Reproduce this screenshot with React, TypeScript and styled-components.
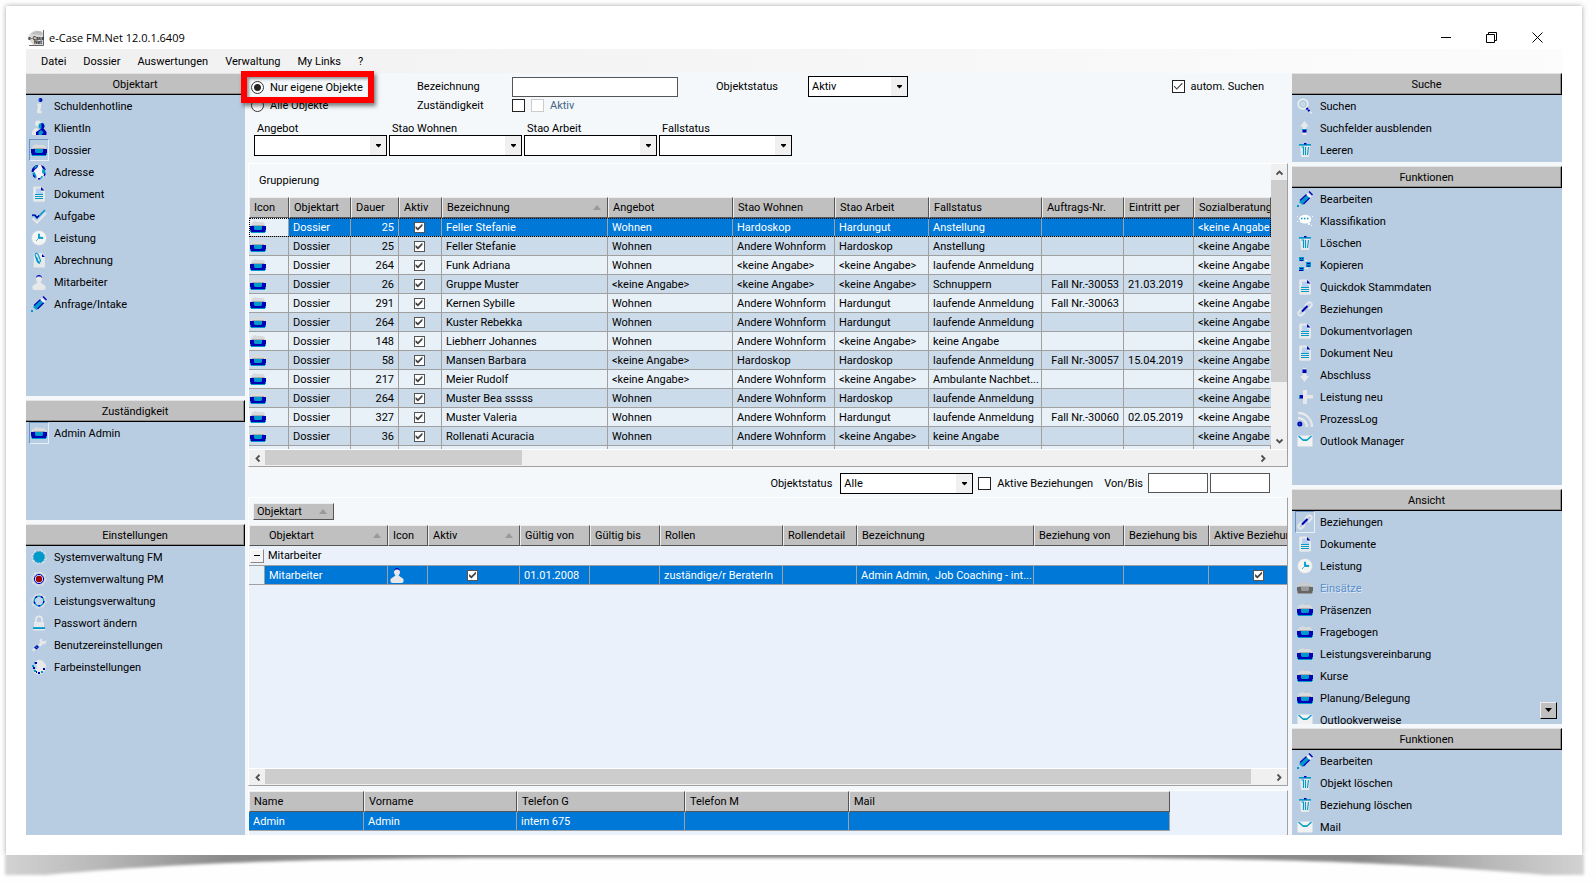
import React from "react";
import styled, { createGlobalStyle, css } from "styled-components";

const color = {
  panel: "#b8cce2",
  surface: "#f4f8fb",
  gridBack: "#eaf1fa",
  rowLight: "#e8f0f8",
  rowDark: "#cbdbea",
  header: "#c0c0c0",
  select: "#0078d8",
  line: "#a0a0a0",
  navy: "#0000b4",
  cyan: "#0099cc",
  pale: "#e6e8ea",
};

const GlobalStyle = createGlobalStyle`
  *, *::before, *::after { box-sizing: border-box; }
  body { margin: 0; background: #fefefe; }
  body, button, input, select, table {
    font-family: Roboto, "Liberation Sans", sans-serif;
    font-size: 11px;
    line-height: 13px;
    color: #000;
  }
  button { border: 0; padding: 0; background: none; }
`;

/* ---------- page and window ---------- */

const Page = styled.div`
  display: flex;
  flex-direction: column;
  height: 100vh;
  min-height: 760px;
`;

const Paper = styled.div`
  flex: 1;
  min-height: 0;
  display: flex;
  margin: 6px 14px 0 6px;
  padding: 20px 20px 20px;
  background: #fff;
  box-shadow: 0 0 5px rgba(0, 0, 0, 0.35);
`;

const CurlShadow = styled.svg`
  display: block;
  flex: none;
  width: 100%;
  height: 29px;
  position: relative;
  background: #fefefe;
`;

const AppWindow = styled.div`
  flex: 1;
  min-width: 0;
  display: flex;
  flex-direction: column;
`;

const TitleBar = styled.header`
  display: flex;
  align-items: center;
  height: 23px;
  padding: 0 2px;
  gap: 5px;
`;

const Title = styled.h1`
  flex: 1;
  margin: 0;
  font: 400 11px/16px "Open Sans", "Noto Sans", sans-serif;
`;

const WindowButtons = styled.div`
  display: flex;
`;

const WindowButton = styled.button`
  display: grid;
  place-items: center;
  width: 46px;
  height: 20px;
`;

const MenuBar = styled.nav`
  display: flex;
  align-items: center;
  gap: 17px;
  height: 24px;
  padding-left: 15px;
  background: linear-gradient(90deg, #f0f0f0, #fcfcfc);
`;

const MenuButton = styled.button`
  height: 20px;
`;

const Workspace = styled.div`
  flex: 1;
  min-height: 0;
  display: flex;
  background: ${color.surface};
`;

const SideBar = styled.aside<{ $width: number }>`
  flex: none;
  width: ${(p) => p.$width}px;
  display: flex;
  flex-direction: column;
  gap: 4px;
`;

const Centre = styled.main`
  flex: 1;
  min-width: 0;
  display: flex;
  flex-direction: column;
  padding: 0 4px 0 3px;
`;

/* ---------- side panels ---------- */

const SidePanel = styled.section<{ $height?: number }>`
  flex: ${(p) => (p.$height ? `0 0 ${p.$height}px` : "1 1 0")};
  min-height: 0;
  display: flex;
  flex-direction: column;
  overflow: hidden;
  background: ${color.panel};
  position: relative;
`;

const PanelTitle = styled.h2`
  flex: none;
  height: 22px;
  margin: 0;
  font-size: 11px;
  font-weight: 400;
  line-height: 21px;
  text-align: center;
  background: ${color.header};
  border: solid;
  border-width: 1px 1px 1px 0;
  border-color: #e4e4e4 #000 #000;
  box-shadow: inset -1px -1px #8c8c8c;
`;

const ItemList = styled.ul`
  list-style: none;
  margin: 0;
  padding: 0;
`;

const ItemButton = styled.button<{ $off?: boolean }>`
  display: flex;
  align-items: center;
  gap: 5px;
  width: 100%;
  height: 22px;
  padding-left: 3px;
  text-align: left;
  ${(p) =>
    p.$off &&
    css`
      color: #5b8fc9;
      text-shadow: 1px 1px #dfeaf6;
    `}
`;

const IconFrame = styled.span<{ $on?: boolean }>`
  display: grid;
  place-items: center;
  width: 20px;
  height: 22px;
  border: 1px solid transparent;
  ${(p) => p.$on && "border-color: #6a93c4 #e6eef7 #e6eef7 #6a93c4;"}
`;

const ScrollDown = styled.button`
  position: absolute;
  right: 5px;
  bottom: 5px;
  display: grid;
  place-items: center;
  width: 17px;
  height: 17px;
  background: ${color.header};
  border: 1px solid;
  border-color: #eee #000 #000 #eee;
`;

/* ---------- form controls ---------- */

const Filters = styled.form`
  flex: none;
  height: 90px;
  padding: 3px 24px 0 3px;
`;

const FilterGrid = styled.div`
  display: grid;
  grid-template-columns: 166px 95px 204px 92px 100px 1fr;
  grid-template-rows: 21px 17px;
  align-items: center;
`;

const Choice = styled.label<{ $muted?: boolean }>`
  display: flex;
  align-items: center;
  gap: 6px;
  position: relative;
  color: ${(p) => (p.$muted ? "#3f6584" : "#000")};
`;

const ScopeChoice = styled(Choice)`
  padding-top: 2px;
`;

const Marker = styled.span`
  position: absolute;
  inset: -8px auto auto -10px;
  width: 133px;
  height: 32px;
  border: 6px solid #f00;
  box-shadow: 2px 3px 4px rgba(0, 0, 0, 0.5), inset 2px 2px 3px rgba(0, 0, 0, 0.4);
  z-index: 2;
`;

const Radio = styled.input.attrs({ type: "radio" })`
  appearance: none;
  width: 13px;
  height: 13px;
  margin: 0;
  border: 1px solid #333;
  border-radius: 50%;
  background: #fff;
  &:checked {
    background: radial-gradient(circle, #222 0 3px, #fff 4px);
  }
`;

const Check = styled.input.attrs({ type: "checkbox" })<{ $small?: boolean }>`
  appearance: none;
  flex: none;
  display: grid;
  width: ${(p) => (p.$small ? 11 : 13)}px;
  height: ${(p) => (p.$small ? 11 : 13)}px;
  margin: 0;
  border: 1px solid ${(p) => (p.$small ? "#555" : "#222")};
  background: #fff;
  &:disabled {
    border-color: #ccc;
  }
  &:checked::after {
    content: "";
    background: #444;
    clip-path: ${(p) =>
      p.$small
        ? "polygon(12% 40%, 38% 62%, 88% 12%, 88% 40%, 38% 90%, 12% 66%)"
        : "polygon(10% 50%, 18% 43%, 38% 65%, 85% 16%, 92% 24%, 38% 80%)"};
  }
`;

const CheckPair = styled.div`
  display: flex;
  gap: 6px;
`;

const RightChoice = styled(Choice)`
  justify-self: end;
`;

const TextBox = styled.input<{ $width: number }>`
  width: ${(p) => p.$width}px;
  height: 20px;
  padding: 0 3px;
  border: 1px solid #555;
  background: #fff;
`;

const DropBox = styled.span<{ $width: number }>`
  position: relative;
  display: block;
  width: ${(p) => p.$width}px;
  height: 21px;

  select {
    appearance: none;
    display: block;
    width: 100%;
    height: 100%;
    padding: 0 18px 0 3px;
    border: 1px solid #000;
    border-radius: 0;
    background: linear-gradient(90deg, #fff calc(100% - 16px), #f0f0f0 calc(100% - 16px));
  }

  svg {
    position: absolute;
    right: 5px;
    top: 9px;
    pointer-events: none;
  }
`;

const DropRow = styled.div`
  display: flex;
  gap: 2px;
  margin: 8px 0 0 3px;
`;

const Stack = styled.label`
  display: block;
  span:first-child {
    padding-left: 3px;
  }
`;

const RelationFilters = styled.form`
  flex: none;
  display: flex;
  justify-content: flex-end;
  align-items: center;
  height: 30px;
  padding: 2px 18px 0 0;
`;

const Field = styled.label<{ $gap: number }>`
  display: flex;
  align-items: center;
  gap: ${(p) => p.$gap}px;
  margin-right: 5px;
`;

const RelationChoice = styled(Choice)`
  margin-right: 11px;
`;

const DateRange = styled.div`
  display: flex;
  align-items: center;
  gap: 2px;
  label {
    margin-right: 3px;
  }
`;

/* ---------- data grids ---------- */

const GridPanel = styled.section<{ $grow?: boolean }>`
  flex: ${(p) => (p.$grow ? "1 1 0" : "none")};
  min-height: 0;
  display: flex;
  flex-direction: column;
  overflow: hidden;
  border: solid;
  border-width: 1px;
  border-color: #fff ${color.line} ${color.line} #fff;
  background: ${color.gridBack};
`;

const ContactPanel = styled(GridPanel)`
  height: 45px;
  margin-top: 4px;
  border-bottom: 0;
`;

const GridBody = styled.div`
  display: flex;
`;

const GridView = styled.div<{ $height?: number }>`
  flex: 1;
  min-width: 0;
  overflow: hidden;
  ${(p) => p.$height && `height: ${p.$height}px;`}
`;

const GroupBar = styled.div<{ $tall?: boolean }>`
  display: flex;
  align-items: center;
  height: ${(p) => (p.$tall ? 33 : 27)}px;
  padding-left: ${(p) => (p.$tall ? 10 : 4)}px;
  background: ${color.surface};
`;

const GroupChip = styled.button`
  display: flex;
  align-items: center;
  justify-content: space-between;
  width: 81px;
  height: 17px;
  padding: 0 6px 0 3px;
  background: ${color.header};
  border: 1px solid;
  border-color: #eee #555 #555 #eee;
`;

const Table = styled.table<{ $width: number }>`
  width: ${(p) => p.$width}px;
  table-layout: fixed;
  border-collapse: separate;
  border-spacing: 0;
`;

const HeadCell = styled.th<{ $indent?: boolean }>`
  height: 21px;
  padding: 0 6px 0 ${(p) => (p.$indent ? 19 : 4)}px;
  font-weight: 400;
  text-align: left;
  white-space: nowrap;
  overflow: hidden;
  background: ${color.header};
  border: 1px solid;
  border-color: #eee #555 #555 #eee;
`;

const HeadLabel = styled.span`
  display: flex;
  align-items: center;
  justify-content: space-between;
`;

const Row = styled.tr<{ $dark?: boolean; $selected?: boolean; $focus?: boolean }>`
  background: ${(p) => (p.$dark ? color.rowDark : color.rowLight)};
  ${(p) =>
    p.$selected &&
    css`
      color: #fff;
      td:not([data-plain]) {
        background: ${color.select};
      }
    `}
  ${(p) =>
    p.$focus &&
    css`
      outline: 1px dotted #000;
      outline-offset: -1px;
    `}
`;

const cellPadding = { left: "0 1px 0 4px", right: "0 4px", center: "0 2px 0 0", icon: "0 1px" };

const Cell = styled.td<{ $align?: "right" | "center"; $icon?: boolean }>`
  height: 19px;
  padding: ${(p) => cellPadding[p.$icon ? "icon" : p.$align ?? "left"]};
  text-align: ${(p) => p.$align ?? "left"};
  white-space: nowrap;
  overflow: hidden;
  text-overflow: clip;
  border: solid ${color.line};
  border-width: 0 1px 1px 0;

  svg {
    display: block;
  }
  input {
    margin: 0 auto;
  }
`;

const CutCell = styled(Cell)`
  border-right: 0;
  padding-right: 0;
`;

const GroupCell = styled.td`
  height: 20px;
  padding: 0 1px;
  background: ${color.gridBack};
  border-bottom: 1px solid ${color.line};
`;

const GroupLine = styled.div`
  display: flex;
  align-items: center;
  gap: 4px;
`;

const Collapse = styled.button`
  display: grid;
  place-items: center;
  width: 14px;
  height: 14px;
  background: #f4f4f4;
  border: 1px solid;
  border-color: #fff #888 #888 #fff;
`;

/* ---------- scroll bars ---------- */

const HBar = styled.div`
  flex: none;
  display: flex;
  height: 17px;
  margin-top: auto;
  border-top: 1px solid #fff;
  background: #f0f0f0;
`;

const HTrack = styled.div`
  flex: 1;
  display: flex;
`;

const HThumb = styled.div<{ $size: string }>`
  width: ${(p) => p.$size};
  height: 15px;
  background: #cdcdcd;
`;

const ArrowButton = styled.button<{ $end?: boolean }>`
  display: grid;
  place-items: center;
  width: 16px;
  height: 16px;
  margin-right: ${(p) => (p.$end ? 16 : 0)}px;
`;

const VBar = styled.div`
  display: flex;
  flex-direction: column;
  width: 16px;
  background: #f0f0f0;
`;

const VTrack = styled.div`
  flex: 1;
`;

const VThumb = styled.div`
  height: 80%;
  background: #cdcdcd;
`;

/* ---------- icons ---------- */

type IconName =
  | "info" | "client" | "dossier" | "dossierOff" | "globe" | "doc" | "check" | "clock" | "bill"
  | "person" | "pencil" | "search" | "up" | "down" | "plus" | "trash" | "chat" | "copy" | "link"
  | "rss" | "mail" | "gearFull" | "gearRed" | "gearOpen" | "lock" | "wrench" | "palette";

const N = color.navy;
const C = color.cyan;
const P = color.pale;

const caseShape = (lid: string, body: string, inner: string) => (
  <>
    <path d="M1 7V5l2-2 3-1 1 1h6l2 2v2z" fill={lid} />
    <path d="M2 6h12v1H2z" fill="#a8aeb2" />
    <path d="M0 7h16v4h-1v2H1v-2H0z" fill={body} />
    <path d="M4 7h8v3l-1 1H5l-1-1zM0 11h1v2H0zM15 11h1v2h-1zM1 13h14v1H1z" fill={inner} />
  </>
);

const pageShape = (
  <>
    <path d="M3 .5h7L14 4v11l-1 .8H3l-.8-1V1.500z" fill={P} />
    <path d="M5 2.500h5V6h2v2H5z" fill="#b4d2f0" />
    <path d="M10 1v3.500h3.500z" fill={N} />
  </>
);

const gearTeeth = (
  <>
    <circle cx="8" cy="8" r="6.200" fill="none" stroke="#d3dce4" strokeWidth="1.400" />
    <circle cx="8" cy="8" r="7.200" fill="none" stroke="#d9dee2" strokeWidth="1.200" strokeDasharray="2.500 3.155" />
  </>
);

const drawings: Record<IconName, React.ReactNode> = {
  info: (
    <>
      <circle cx="9.500" cy="2" r="2" fill={N} />
      <circle cx="8.800" cy="2" r=".8" fill={C} />
      <path d="M6 5.500h4.500L9.300 13h1.400v2.300H6V13l1-5.500H6z" fill={P} />
    </>
  ),
  client: (
    <>
      <circle cx="7" cy="3.500" r="3" fill={P} />
      <path d="M1 14c0-4 2-6 5-6l2 2v5H1z" fill={P} />
      <circle cx="10.500" cy="6" r="3" fill={C} />
      <path d="M10.500 3a3 3 0 0 1 2 5.200L15.500 12v3H5v-3l4-2.500 1.500-1z" fill={N} />
      <path d="M7.500 12 10 10l2.500 2-2 3h-3z" fill={C} />
    </>
  ),
  dossier: caseShape("#d8dadc", N, C),
  dossierOff: caseShape("#c9cbcd", "#666", "#999"),
  globe: (
    <>
      <circle cx="8" cy="8" r="7" fill="#f2f5f7" />
      <path d="M3 2.500 5.500 1l2 .5L6 4 3.500 6l-1 2L.5 8 1 5zM10 1l3 1.500L15 6l-2.500-.5L11 3.500z" fill={N} />
      <path d="M4 2l3-.5L5 4 3 5zM1 9l2.500-1L5 11l1 3-3-1.500zM11.500 4.500l3 2V9l-2.500 1-1-2z" fill={C} />
      <path d="M1.500 10.500l1.500.5 2 3.500-2.500-1.500zM13.500 9l1.500.5-1.500 3-1-1zM7 14h3l-1 1.500H7z" fill={N} />
      <path d="M10.500 12l2 .5-2 2h-1.500z" fill={C} />
    </>
  ),
  doc: (
    <>
      {pageShape}
      <path d="M4 8h8v1H4zM4 10h8v1H4zM4 12h8v1H4z" fill={C} />
    </>
  ),
  check: (
    <>
      <path d="M1.500 10.500 6 14.500 15 5" fill="none" stroke={P} strokeWidth="2" />
      <path d="M1 7.500h3L6 10l8-8" fill="none" stroke={C} strokeWidth="1.600" />
      <path d="M1 7.200h3L6 9.500l2-2" fill="none" stroke={N} strokeWidth="1.300" />
    </>
  ),
  clock: (
    <>
      <circle cx="8" cy="8" r="7.300" fill="#f3f4f4" stroke="#d4d8db" strokeDasharray="1.500 1" />
      <path d="M7.500 4v4.500H12V7.500L8.500 7V4z" fill={C} stroke={C} strokeWidth=".8" />
      <path d="M7.500 8.500 5 11" stroke="#2fa3a8" strokeWidth=".8" />
    </>
  ),
  bill: (
    <>
      <path d="M3 1h8l3 3v11.500H2.500z" fill={P} />
      <path d="M11 2v3h3z" fill={N} />
      <path d="M4 2.500c1-2 3-1 3.500 1l2 5c0 2-2 2-2.500.5L5.500 5M4 2.500l1.500 5c1 3 2 4 3.500 3.500" fill="none" stroke={C} strokeWidth="1.100" />
    </>
  ),
  person: (
    <>
      <path d="M5 5a3 3 0 1 1 6 0c0 2-1 3-1.500 3.500L14.500 12v3L13 16H3l-1.500-1v-3l5-3.500C6 8 5 7 5 5z" fill={P} />
      <path d="M5 4c0-4 6-4 6 0L9.500 2.500h-3z" fill={N} />
    </>
  ),
  pencil: (
    <>
      <path d="M2 11 9.500 4l3 3-7 7z" fill={C} />
      <path d="M3 9.500l6.500-6M6.500 13l6.500-6.500" stroke={N} strokeWidth="1.200" />
      <path d="M9.500 3.500 11 2l3.500 3.500L13 7z" fill="#f4f6f8" />
      <path d="M11.500 1 12.500 0l3.500 3.500-1 1z" fill={N} />
      <path d="M0 14h2v2H0z" fill={C} />
    </>
  ),
  search: (
    <>
      <circle cx="6" cy="6" r="4.700" fill="#c6d9ec" stroke="#eef1f3" strokeWidth="1.800" />
      <circle cx="6" cy="6" r="3.400" fill="none" stroke="#a9c8cf" />
      <path d="M9.500 10l3.500 4" stroke={N} strokeWidth="2" strokeDasharray="2 .6" />
      <path d="M12.500 13.500l2.500 2" stroke={P} strokeWidth="1.800" />
    </>
  ),
  up: (
    <>
      <path d="M7.500 1 12 6.500H9.500V9h-4V6.500H3zM5.500 12.500h4V15h-4z" fill={P} />
      <path d="M5.500 9h4v3.500h-4z" fill={N} />
      <path d="M5.500 9h4v1h-4z" fill={C} />
    </>
  ),
  down: (
    <>
      <path d="M5.500 6.500h4V9H12l-4.500 6L3 9h2.500zM6 1h3v1H6z" fill={P} />
      <path d="M5.500 2.500h4V6h-4z" fill={N} />
    </>
  ),
  plus: (
    <>
      <path d="M6 1h4v5h6v3.500h-6V15H6z" fill={P} />
      <path d="M2 6h4v3.500H2z" fill={N} />
      <path d="M2 6h1v3.500H2z" fill={C} />
    </>
  ),
  trash: (
    <>
      <path d="M3 4h10l-1 11H4z" fill={P} />
      <path d="M2 2h12v1.600H2z" fill={C} />
      <path d="M7 1h2.500v1.500H7z" fill={N} />
      <path d="M4.500 5h2v8M8.500 5v8M11.500 5l-1 8" fill="none" stroke={C} strokeWidth="1.100" />
    </>
  ),
  chat: (
    <>
      <path d="M2 5.500c2-5 11-5 12 0 1 4-4 5.500-7 5L3.500 9.500z" fill="#fff" />
      <path d="M0 3h1v1H0zM15 3h1v1h-1zM11 10h2v2h-2zM14 12h1v1h-1zM0 8h1v1H0z" fill="#fff" />
      <path d="M4 5.500h1.500M7 5.500h1.500M10 5.500h1.500" stroke={C} strokeWidth="1.300" />
    </>
  ),
  copy: (
    <>
      <path d="M2 0h5v4H2zM9 5h5v5H9zM2 10h5v4H2z" fill={C} />
      <path d="M3 1h1v1H3zM5 1h1v1H5zM3 3h3v1H3zM10 6h3v1h-3zM10 8.500h3v1h-3zM3 11h3v1H3zM2 13h4v1H2z" fill={N} />
      <path d="M8 3h2v1H8zM8 11h3v1H8z" fill={P} />
    </>
  ),
  link: (
    <>
      <path d="M8 5l3-3.200c2-1.500 5 1 3.300 3.400L11.500 8M8 11l-3 3c-2 1.700-4.800-.8-3.300-3L4.500 8" fill="none" stroke={P} strokeWidth="1.900" />
      <path d="M5 10.500 10.500 5" stroke={N} strokeWidth="2" />
    </>
  ),
  rss: (
    <>
      <path d="M1 2c8 0 14 6 14 14M1 7c5 0 9 4 9 9" fill="none" stroke={P} strokeWidth="2.400" />
      <circle cx="2.800" cy="13" r="2.500" fill={N} />
      <circle cx="2.800" cy="13" r=".8" fill={C} />
    </>
  ),
  mail: (
    <>
      <path d="M.5 2.500h15v11H.5z" fill="#f0f2f3" />
      <path d="M1.500 3 6 7h4l4.500-4" fill="none" stroke={C} strokeWidth="1.300" />
      <path d="M6 7.500h4" stroke="#00a8a8" />
    </>
  ),
  gearFull: (
    <>
      {gearTeeth}
      <circle cx="8" cy="8" r="5.500" fill={C} />
      <circle cx="8" cy="8" r="5.800" fill="none" stroke={C} strokeDasharray="1.500 1.500" />
    </>
  ),
  gearRed: (
    <>
      {gearTeeth}
      <circle cx="8" cy="8" r="4.600" fill="#d8e8f2" stroke={N} />
      <circle cx="8" cy="8" r="3.200" fill="#a00000" />
    </>
  ),
  gearOpen: (
    <>
      {gearTeeth}
      <circle cx="8" cy="8" r="4.800" fill="#c3d5ea" stroke={C} strokeWidth="1.300" />
      <circle cx="8" cy="8" r="4.800" fill="none" stroke={N} strokeWidth="1.300" strokeDasharray="2 4" />
    </>
  ),
  lock: (
    <>
      <path d="M5 7V4c0-3.500 6-3.500 6 0v3" fill="none" stroke={P} strokeWidth="1.800" />
      <path d="M3 7h10v5H3zM2 14h12v1.500H2z" fill={P} />
      <path d="M2 12.200h12V14H2z" fill={C} />
    </>
  ),
  wrench: (
    <>
      <path d="M7 8l2-2-.5-3L11 1v3h3l1.500-1-1 4-3 .5-2 2z" fill={P} />
      <path d="M3 10.500 6 8l2 2-2.500 2.500z" fill={N} />
      <path d="M4.500 9.800l2 1" stroke={C} />
      <path d="M1 13l2-2 1.500 1.500-2 2z" fill={P} />
    </>
  ),
  palette: (
    <>
      <path d="M4 2.500 8 .5l4 1.500 3 4-.5 5L11 15l-5 .5L2 13l4-4z" fill={P} />
      <path d="M3 3h2v1.500H3zM1 6h2v2H1zM3 11h2v2H3zM10 12h2v2h-2z" fill={C} />
      <path d="M4 3h2v2H4zM2 8h2v2H2zM5 12h1v2H5zM7 13h2v2H7zM12 9h2v2h-2z" fill={N} />
    </>
  ),
};

const Icon = ({ name }: { name: IconName }) => (
  <svg width="16" height="16" viewBox="0 0 16 16" aria-hidden="true">
    {drawings[name]}
  </svg>
);

const SortMark = () => (
  <svg width="8" height="5" viewBox="0 0 8 5" aria-hidden="true">
    <path d="M4 0 8 5H0z" fill="#999" />
  </svg>
);

const DropMark = () => (
  <svg width="7" height="4" viewBox="0 0 7 4" aria-hidden="true">
    <path d="M1 0h5v1L3.500 3.500 1 1z" fill="#000" />
  </svg>
);

const Chevron = ({ turn }: { turn: number }) => (
  <svg width="9" height="9" viewBox="0 0 9 9" aria-hidden="true">
    <path d="M1.500 6.500l3-3 3 3" transform={`rotate(${turn} 4.500 4.500)`} fill="none" stroke="#505050" strokeWidth="1.800" />
  </svg>
);

const AppLogo = () => (
  <svg width="16" height="16" viewBox="0 0 16 16" aria-hidden="true">
    <path d="M0 8C1 3 5 .5 9 .5L15 2v13H5z" fill="#d9d9d9" />
    <path d="M3 4c3-3 8-4 11-2v3z" fill="#bdbdbd" />
    <path d="M15.500 0v15.500H1" fill="none" stroke="#666" />
    <text x="0" y="9.500" fontSize="5" fontWeight="700" fill="#222">e-Case</text>
    <text x="6" y="14" fontSize="5" fontWeight="700" fill="#222">Net</text>
  </svg>
);

/* ---------- data ---------- */

type Item = { icon: IconName; label: string; on?: boolean; off?: boolean };

const objectTypes: Item[] = [
  { icon: "info", label: "Schuldenhotline" },
  { icon: "client", label: "KlientIn" },
  { icon: "dossier", label: "Dossier", on: true },
  { icon: "globe", label: "Adresse" },
  { icon: "doc", label: "Dokument" },
  { icon: "check", label: "Aufgabe" },
  { icon: "clock", label: "Leistung" },
  { icon: "bill", label: "Abrechnung" },
  { icon: "person", label: "Mitarbeiter" },
  { icon: "pencil", label: "Anfrage/Intake" },
];

const settings: Item[] = [
  { icon: "gearFull", label: "Systemverwaltung FM" },
  { icon: "gearRed", label: "Systemverwaltung PM" },
  { icon: "gearOpen", label: "Leistungsverwaltung" },
  { icon: "lock", label: "Passwort ändern" },
  { icon: "wrench", label: "Benutzereinstellungen" },
  { icon: "palette", label: "Farbeinstellungen" },
];

const searchItems: Item[] = [
  { icon: "search", label: "Suchen" },
  { icon: "up", label: "Suchfelder ausblenden" },
  { icon: "trash", label: "Leeren" },
];

const functions: Item[] = [
  { icon: "pencil", label: "Bearbeiten" },
  { icon: "chat", label: "Klassifikation" },
  { icon: "trash", label: "Löschen" },
  { icon: "copy", label: "Kopieren" },
  { icon: "doc", label: "Quickdok Stammdaten" },
  { icon: "link", label: "Beziehungen" },
  { icon: "doc", label: "Dokumentvorlagen" },
  { icon: "doc", label: "Dokument Neu" },
  { icon: "down", label: "Abschluss" },
  { icon: "plus", label: "Leistung neu" },
  { icon: "rss", label: "ProzessLog" },
  { icon: "mail", label: "Outlook Manager" },
];

const views: Item[] = [
  { icon: "link", label: "Beziehungen", on: true },
  { icon: "doc", label: "Dokumente" },
  { icon: "clock", label: "Leistung" },
  { icon: "dossierOff", label: "Einsätze", off: true },
  { icon: "dossier", label: "Präsenzen" },
  { icon: "dossier", label: "Fragebogen" },
  { icon: "dossier", label: "Leistungsvereinbarung" },
  { icon: "dossier", label: "Kurse" },
  { icon: "dossier", label: "Planung/Belegung" },
  { icon: "mail", label: "Outlookverweise" },
];

const relationFunctions: Item[] = [
  { icon: "pencil", label: "Bearbeiten" },
  { icon: "trash", label: "Objekt löschen" },
  { icon: "trash", label: "Beziehung löschen" },
  { icon: "mail", label: "Mail" },
];

const NA = "<keine Angabe>";
const AW = "Andere Wohnform";
const LA = "laufende Anmeldung";

const dossierColumns: [string, number][] = [
  ["Icon", 40], ["Objektart", 62], ["Dauer", 48], ["Aktiv", 43], ["Bezeichnung", 166], ["Angebot", 125],
  ["Stao Wohnen", 102], ["Stao Arbeit", 94], ["Fallstatus", 113], ["Auftrags-Nr.", 82], ["Eintritt per", 70],
  ["Sozialberatung", 77],
];

const dossiers: [number, string, string, string, string, string, string?, string?][] = [
  [25, "Feller Stefanie", "Wohnen", "Hardoskop", "Hardungut", "Anstellung"],
  [25, "Feller Stefanie", "Wohnen", AW, "Hardoskop", "Anstellung"],
  [264, "Funk Adriana", "Wohnen", NA, NA, LA],
  [26, "Gruppe Muster", NA, NA, NA, "Schnuppern", "Fall Nr.-30053", "21.03.2019"],
  [291, "Kernen Sybille", "Wohnen", AW, "Hardungut", LA, "Fall Nr.-30063"],
  [264, "Kuster Rebekka", "Wohnen", AW, "Hardungut", LA],
  [148, "Liebherr Johannes", "Wohnen", AW, NA, "keine Angabe"],
  [58, "Mansen Barbara", NA, "Hardoskop", "Hardoskop", LA, "Fall Nr.-30057", "15.04.2019"],
  [217, "Meier Rudolf", NA, AW, NA, "Ambulante Nachbet..."],
  [264, "Muster Bea sssss", "Wohnen", AW, "Hardoskop", LA],
  [327, "Muster Valeria", "Wohnen", AW, "Hardungut", LA, "Fall Nr.-30060", "02.05.2019"],
  [36, "Rollenati Acuracia", "Wohnen", AW, NA, "keine Angabe"],
];

const relationColumns: [string, number][] = [
  ["Icon", 40], ["Aktiv", 92], ["Gültig von", 70], ["Gültig bis", 70], ["Rollen", 123], ["Rollendetail", 74],
  ["Bezeichnung", 177], ["Beziehung von", 90], ["Beziehung bis", 85], ["Aktive Beziehung", 102],
];

const contactColumns: [string, number][] = [
  ["Name", 115], ["Vorname", 153], ["Telefon G", 168], ["Telefon M", 164], ["Mail", 321],
];

const total = (columns: [string, number][]) => columns.reduce((sum, [, w]) => sum + w, 0);

/* ---------- composed parts ---------- */

const Panel = ({ title, items, height, more }: { title: string; items: Item[]; height?: number; more?: boolean }) => (
  <SidePanel $height={height}>
    <PanelTitle>{title}</PanelTitle>
    <ItemList>
      {items.map((item) => (
        <li key={item.label}>
          <ItemButton type="button" $off={item.off} disabled={item.off}>
            <IconFrame $on={item.on}>
              <Icon name={item.icon} />
            </IconFrame>
            {item.label}
          </ItemButton>
        </li>
      ))}
    </ItemList>
    {more && (
      <ScrollDown type="button" aria-label="Weitere Einträge">
        <svg width="9" height="5" viewBox="0 0 9 5" aria-hidden="true">
          <path d="M1 0h7L4.500 4z" fill="#000" />
        </svg>
      </ScrollDown>
    )}
  </SidePanel>
);

const Drop = ({ width, value = "", label }: { width: number; value?: string; label?: string }) => (
  <DropBox $width={width}>
    <select defaultValue={value} aria-label={label}>
      <option>{value}</option>
    </select>
    <DropMark />
  </DropBox>
);

const HScroll = ({ size, inset }: { size: string; inset?: boolean }) => (
  <HBar>
    <ArrowButton type="button" aria-label="Nach links">
      <Chevron turn={-90} />
    </ArrowButton>
    <HTrack>
      <HThumb $size={size} />
    </HTrack>
    <ArrowButton type="button" aria-label="Nach rechts" $end={inset}>
      <Chevron turn={90} />
    </ArrowButton>
  </HBar>
);

const ColumnHead = ({ name, sorted }: { name: string; sorted?: boolean }) => (
  <HeadCell scope="col">
    <HeadLabel>
      {name}
      {sorted && <SortMark />}
    </HeadLabel>
  </HeadCell>
);

const DossierTable = () => (
  <Table $width={total(dossierColumns)}>
    <colgroup>
      {dossierColumns.map(([name, width]) => (
        <col key={name} width={width} />
      ))}
    </colgroup>
    <thead>
      <tr>
        {dossierColumns.map(([name]) => (
          <ColumnHead key={name} name={name} sorted={name === "Bezeichnung"} />
        ))}
      </tr>
    </thead>
    <tbody>
      {dossiers.map(([days, name, offer, living, work, status, order = "", entry = ""], i) => (
        <Row key={i} $dark={i % 2 === 1} $selected={i === 0} $focus={i === 0}>
          <Cell $icon data-plain>
            <Icon name="dossier" />
          </Cell>
          <Cell>Dossier</Cell>
          <Cell $align="right">{days}</Cell>
          <Cell $align="center">
            <Check $small defaultChecked aria-label={`${name} aktiv`} />
          </Cell>
          <Cell>{name}</Cell>
          <Cell>{offer}</Cell>
          <Cell>{living}</Cell>
          <Cell>{work}</Cell>
          <Cell>{status}</Cell>
          <Cell $align="right">{order}</Cell>
          <Cell>{entry}</Cell>
          <CutCell>{"<keine Angabe"}</CutCell>
        </Row>
      ))}
      <Row>
        {dossierColumns.map(([name]) => (
          <Cell key={name} />
        ))}
      </Row>
    </tbody>
  </Table>
);

const RelationTable = () => (
  <Table $width={total(relationColumns) + 139}>
    <colgroup>
      <col width={16} />
      <col width={123} />
      {relationColumns.map(([name, width]) => (
        <col key={name} width={width} />
      ))}
    </colgroup>
    <thead>
      <tr>
        <HeadCell scope="col" colSpan={2} $indent>
          <HeadLabel>
            Objektart
            <SortMark />
          </HeadLabel>
        </HeadCell>
        {relationColumns.map(([name]) => (
          <ColumnHead key={name} name={name} sorted={name === "Aktiv"} />
        ))}
      </tr>
    </thead>
    <tbody>
      <tr>
        <GroupCell colSpan={12}>
          <GroupLine>
            <Collapse type="button" aria-label="Gruppe schliessen">
              <svg width="6" height="1" aria-hidden="true">
                <path d="M0 0h6v1H0z" />
              </svg>
            </Collapse>
            Mitarbeiter
          </GroupLine>
        </GroupCell>
      </tr>
      <Row $selected>
        <Cell data-plain />
        <Cell>Mitarbeiter</Cell>
        <Cell $icon>
          <Icon name="person" />
        </Cell>
        <Cell $align="center">
          <Check $small defaultChecked aria-label="Mitarbeiter aktiv" />
        </Cell>
        <Cell>01.01.2008</Cell>
        <Cell />
        <Cell>zuständige/r BeraterIn</Cell>
        <Cell />
        <Cell>Admin Admin,&nbsp; Job Coaching - int...</Cell>
        <Cell />
        <Cell />
        <Cell $align="center">
          <Check $small defaultChecked aria-label="Aktive Beziehung" />
        </Cell>
      </Row>
    </tbody>
  </Table>
);

const ContactTable = () => (
  <Table $width={total(contactColumns)}>
    <colgroup>
      {contactColumns.map(([name, width]) => (
        <col key={name} width={width} />
      ))}
    </colgroup>
    <thead>
      <tr>
        {contactColumns.map(([name]) => (
          <ColumnHead key={name} name={name} />
        ))}
      </tr>
    </thead>
    <tbody>
      <Row $selected>
        <Cell>Admin</Cell>
        <Cell>Admin</Cell>
        <Cell>intern 675</Cell>
        <Cell />
        <Cell />
      </Row>
    </tbody>
  </Table>
);

export default function App() {
  return (
    <Page>
      <GlobalStyle />
      <Paper>
        <AppWindow>
          <TitleBar>
            <AppLogo />
            <Title>e-Case FM.Net 12.0.1.6409</Title>
            <WindowButtons>
              <WindowButton type="button" aria-label="Minimieren">
                <svg width="11" height="11" aria-hidden="true">
                  <path d="M1 5.500h10" stroke="#000" />
                </svg>
              </WindowButton>
              <WindowButton type="button" aria-label="Verkleinern">
                <svg width="11" height="11" aria-hidden="true">
                  <path d="M.5 2.500h8v8h-8zM2.500 2.500v-2h8v8h-2" fill="none" stroke="#000" />
                </svg>
              </WindowButton>
              <WindowButton type="button" aria-label="Schliessen">
                <svg width="11" height="11" aria-hidden="true">
                  <path d="M.5.5l10 10M10.500.5l-10 10" stroke="#000" />
                </svg>
              </WindowButton>
            </WindowButtons>
          </TitleBar>
          <MenuBar>
            {["Datei", "Dossier", "Auswertungen", "Verwaltung", "My Links", "?"].map((entry) => (
              <MenuButton type="button" key={entry}>
                {entry}
              </MenuButton>
            ))}
          </MenuBar>
          <Workspace>
            <SideBar $width={219}>
              <Panel title="Objektart" items={objectTypes} height={323} />
              <Panel title="Zuständigkeit" items={[{ icon: "dossier", label: "Admin Admin", on: true }]} height={120} />
              <Panel title="Einstellungen" items={settings} />
            </SideBar>

            <Centre>
              <Filters>
                <FilterGrid>
                  <ScopeChoice>
                    <Radio name="scope" defaultChecked />
                    Nur eigene Objekte
                    <Marker />
                  </ScopeChoice>
                  <label htmlFor="bezeichnung">Bezeichnung</label>
                  <TextBox id="bezeichnung" $width={166} />
                  <label htmlFor="objektstatus">Objektstatus</label>
                  <DropBox $width={100}>
                    <select id="objektstatus" defaultValue="Aktiv">
                      <option>Aktiv</option>
                    </select>
                    <DropMark />
                  </DropBox>
                  <RightChoice>
                    <Check defaultChecked />
                    autom. Suchen
                  </RightChoice>
                  <Choice>
                    <Radio name="scope" />
                    Alle Objekte
                  </Choice>
                  <label htmlFor="zustaendigkeit">Zuständigkeit</label>
                  <CheckPair>
                    <Check id="zustaendigkeit" />
                    <Choice $muted>
                      <Check disabled />
                      Aktiv
                    </Choice>
                  </CheckPair>
                </FilterGrid>
                <DropRow>
                  {["Angebot", "Stao Wohnen", "Stao Arbeit", "Fallstatus"].map((name) => (
                    <Stack key={name}>
                      <span>{name}</span>
                      <Drop width={133} />
                    </Stack>
                  ))}
                </DropRow>
              </Filters>

              <GridPanel>
                <GridBody>
                  <GridView $height={285}>
                    <GroupBar $tall>Gruppierung</GroupBar>
                    <DossierTable />
                  </GridView>
                  <VBar>
                    <ArrowButton type="button" aria-label="Nach oben">
                      <Chevron turn={0} />
                    </ArrowButton>
                    <VTrack>
                      <VThumb />
                    </VTrack>
                    <ArrowButton type="button" aria-label="Nach unten">
                      <Chevron turn={180} />
                    </ArrowButton>
                  </VBar>
                </GridBody>
                <HScroll size="26%" inset />
              </GridPanel>

              <RelationFilters>
                <Field $gap={8}>
                  Objektstatus
                  <Drop width={133} value="Alle" />
                </Field>
                <RelationChoice>
                  <Check />
                  Aktive Beziehungen
                </RelationChoice>
                <DateRange>
                  <label htmlFor="von">Von/Bis</label>
                  <TextBox id="von" $width={60} />
                  <TextBox aria-label="Bis" $width={60} />
                </DateRange>
              </RelationFilters>

              <GridPanel $grow>
                <GroupBar>
                  <GroupChip type="button">
                    Objektart
                    <SortMark />
                  </GroupChip>
                </GroupBar>
                <RelationTable />
                <HScroll size="98%" />
              </GridPanel>

              <ContactPanel>
                <ContactTable />
              </ContactPanel>
            </Centre>

            <SideBar $width={270}>
              <Panel title="Suche" items={searchItems} height={89} />
              <Panel title="Funktionen" items={functions} height={319} />
              <Panel title="Ansicht" items={views} height={235} more />
              <Panel title="Funktionen" items={relationFunctions} />
            </SideBar>
          </Workspace>
        </AppWindow>
      </Paper>
      <CurlShadow viewBox="0 0 1596 29" preserveAspectRatio="none" aria-hidden="true">
        <defs>
          <linearGradient id="curl" x1="0" x2="1" y1="0" y2="0">
            <stop offset="0" stopColor="#d2d2d2" />
            <stop offset="0.06" stopColor="#b8b8b8" />
            <stop offset="0.14" stopColor="#8a8a8a" />
            <stop offset="0.86" stopColor="#8a8a8a" />
            <stop offset="0.94" stopColor="#b8b8b8" />
            <stop offset="1" stopColor="#d2d2d2" />
          </linearGradient>
          <filter id="soft" x="-1%" y="-30%" width="102%" height="160%">
            <feGaussianBlur stdDeviation="1.500" />
          </filter>
        </defs>
        <path d="M5-6H1584V20H1545C1450 12 1350 4 1100 3H490C240 4 140 12 45 20H5z" fill="url(#curl)" filter="url(#soft)" />
      </CurlShadow>
    </Page>
  );
}
